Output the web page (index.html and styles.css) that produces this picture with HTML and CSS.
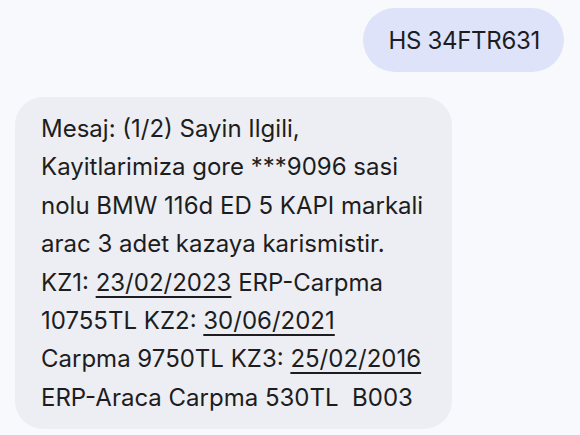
FILE: index.html
```html
<!DOCTYPE html>
<html lang="tr">
<head>
    <meta charset="UTF-8">
    <title>Mesajlar</title>
    <link rel="stylesheet" href="styles.css">
</head>
<body>
    <div class="thread">
        <div class="bubble sent">HS 34FTR631</div>

        <div class="bubble received">
            Mesaj: (1/2) Sayin Ilgili,<br>
            Kayitlarimiza gore ***9096 sasi<br>
            nolu BMW 116d ED 5 KAPI markali<br>
            arac 3 adet kazaya karismistir.<br>
            KZ1: <span class="date">23/02/2023</span> ERP-Carpma<br>
            10755TL KZ2: <span class="date">30/06/2021</span><br>
            Carpma 9750TL KZ3: <span class="date">25/02/2016</span><br>
            ERP-Araca Carpma 530TL&nbsp; B003
        </div>
    </div>
</body>
</html>
```

FILE: styles.css
```css
* {
    margin: 0;
    padding: 0;
    box-sizing: border-box;
}
body {
    font-family: Inter, Roboto, sans-serif;
    background-color: #f8f9fc;
    color: #1d1d21;
}
.thread {
    display: flex;
    flex-direction: column;
    gap: 25px;
    padding: 8px 16px 0 15px;
}
.bubble {
    font-size: 24px;
}
.sent {
    align-self: flex-end;
    background-color: #dfe3fa;
    border-radius: 32px;
    height: 64px;
    padding: 0 24px 0 25px;
    display: flex;
    align-items: center;
    letter-spacing: -0.3px;
}
.received {
    align-self: flex-start;
    width: 437px;
    background-color: #eceef3;
    border-radius: 28px;
    padding: 13px 10px 12px 26px;
    line-height: 38.4px;
}
.date {
    text-decoration: underline;
    text-decoration-thickness: 2px;
    text-underline-offset: 5px;
}
```
